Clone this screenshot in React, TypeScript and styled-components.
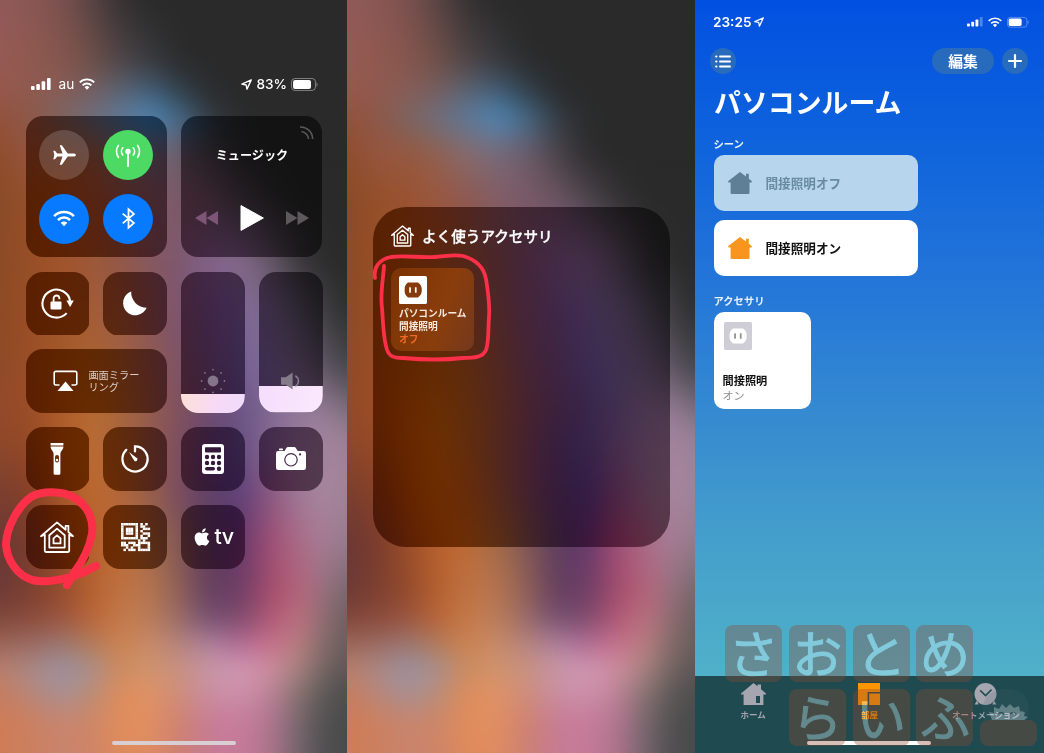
import React from "react";
import styled, { createGlobalStyle } from "styled-components";
import { FaApple } from "react-icons/fa";

const jp = `"Noto Sans CJK JP", sans-serif`;
const latin = `Inter, "Noto Sans CJK JP", sans-serif`;

const GlobalStyle = createGlobalStyle`
  *, *::before, *::after { box-sizing: border-box; }
  body { margin: 0; font-family: ${jp}; background: #2a2a2a; }
  svg { display: block; flex: none; overflow: visible; }
`;

/* ---------- shared ---------- */

const Board = styled.main`
  display: grid;
  grid-template-columns: 347px 348px 349px;
  width: 1044px;
  height: 753px;
  overflow: hidden;
`;

const Screen = styled.section`
  position: relative;
  isolation: isolate;
  display: flex;
  flex-direction: column;
  height: 753px;
  overflow: hidden;
  color: #fff;
`;

const WallpaperSvg = styled.svg`
  position: absolute;
  left: -40px;
  top: -40px;
  z-index: -1;
  width: 428px;
  height: 833px;
  filter: blur(11px);
`;

const Scribble = styled.svg`
  position: absolute;
  inset: 0;
  width: 100%;
  height: 100%;
  pointer-events: none;
  fill: none;
  stroke: #fc2f49;
  stroke-linecap: round;
  stroke-linejoin: round;
`;

const COLS = [0, 30, 60, 90, 120, 150, 180, 210, 240, 270, 300, 325, 348];
const ROWS: [number, string][] = [
  [0, "905a5a 8a5755 7c514e 5a4545 363132 2a2a2a 2a2a2a 2a2a2a 2a2a2a 2a2a2a 2a2a2a 2a2a2a 2a2a2a"],
  [60, "965a53 90594f 86574e 705048 504548 393a3d 2b2b2c 2a2a2a 2a2a2a 2a2a2a 2a2a2a 2a2a2a 2a2a2a"],
  [95, "96574a 905a4f 865e58 786064 5d6878 456482 34444f 2b2d2f 2a2a2a 2a2a2a 2a2a2a 2a2a2a 2a2a2a"],
  [116, "93523c 8c5849 7c6462 6c6f7e 5c7898 4c88b8 446a8a 343c44 2a2b2c 2a2a2a 2a2a2a 2a2a2a 2a2a2a"],
  [155, "8f4c2c 965640 96583e 92604e 886a6c 786a78 6d5c69 4b454b 2f2d2f 2a2a2a 2a2a2a 2a2a2a 2a2a2a"],
  [200, "8a4a28 955029 9a5230 9a5640 8e5850 835d66 7a5967 6e5463 4e464e 343234 2a2a2a 2a2a2a 2a2a2a"],
  [260, "8a4a26 984f27 a0542a 9e5838 925846 855860 7d5770 82648a 86698a 665868 39363a 2c2c2c 2a2a2a"],
  [310, "8c4a26 9a4e26 a0552a a45c36 9c5c46 8a5858 7c5470 785884 806898 7c6c8a 5d5664 3c3b3e 2e2e2f"],
  [365, "8f4a28 9a4e26 a45929 ac632f a26240 905a50 7c5268 735378 745e92 806e96 7b6a82 5b5360 454449"],
  [415, "924a2a 9a4c26 ac5c2a b86b32 a8663c 945c4e 80505f 6c4a6e 6a5284 806892 967a9c 9a8098 806f80"],
  [440, "8f482a 944a26 ae5c29 bc6c32 ac673e 925c50 7c4e60 664672 665282 886892 9a7d9c a4859e 9a8094"],
  [490, "7b4030 863f26 a65426 be6a2e b3663a 955e4c 7a4c60 5f4068 5e427a 8a5880 a07c98 a8879f 9f8298"],
  [540, "6a3836 7a3b2c 9a4d2a b8602c bd6c36 a46a48 7f5856 5c3e5e 64386c a04e74 ab6c88 a67e96 967a8c"],
  [590, "6c3a38 7c3f30 924a2c b4602f c07242 b57550 8e5f58 643e5e 6d3e66 a54c6b b5647a 967280 766669"],
  [618, "80463a 8a4a3a 9a5440 b86438 c57a48 ba7d5b 976a67 735072 7f4a6b b05775 bb7280 8c6c70 6d5e60"],
  [645, "9c685a 9c6c64 9a7874 b27b5c cc8350 c88b6a b78580 b082a0 b46d96 c8728c b87f80 806a68 695c5c"],
  [670, "b98070 ac8a86 9c93a4 a69090 ce8b5f d0956f c8917f c898a8 d29ab6 cf8f9f a5827e 706360 5c5555"],
  [692, "c57c60 b8867a a58f95 b88c78 dd8c5a df9366 cd8c7c c98ea4 ce90ac be8398 84726e 5c5856 4e4c4c"],
  [722, "cf7c56 cc8060 c8856e cd8668 e28d5c e18f62 cf8270 c67c94 c87c9c b27690 75666b 505051 4a4a4b"],
  [753, "cf7c56 cc7f5d c98470 cc8468 df8a5a df8c62 cb7f74 c67b96 c67b9a ad738b 70646a 4e4e4f 4a4a4b"],
];

/** Blurred home-screen wallpaper: each colour row fades into the next one. */
const Wallpaper = ({ id }: { id: string }) => (
  <WallpaperSvg viewBox="-40 -40 428 833" aria-hidden>
    <defs>
      {ROWS.map(([y, colors], i) => {
        const from = i === 0 ? -41 : ROWS[i - 1][0];
        return (
          <React.Fragment key={y}>
            <linearGradient id={`${id}c${i}`} gradientUnits="userSpaceOnUse" x1="0" x2="348" y1="0" y2="0">
              {colors.split(" ").map((c, k) => (
                <stop key={k} offset={COLS[k] / 348} stopColor={`#${c}`} />
              ))}
            </linearGradient>
            <linearGradient id={`${id}f${i}`} gradientUnits="userSpaceOnUse" x1="0" x2="0" y1={from} y2={y}>
              <stop offset="0" stopColor="#fff" stopOpacity="0" />
              <stop offset="1" stopColor="#fff" />
            </linearGradient>
            <mask id={`${id}m${i}`} maskUnits="userSpaceOnUse" x="-40" y="-40" width="428" height="833">
              <rect x="-40" y={from} width="428" height={794 - from} fill={`url(#${id}f${i})`} />
            </mask>
          </React.Fragment>
        );
      })}
    </defs>
    {ROWS.map(([y], i) => (
      <rect
        key={y}
        x="-40"
        y="-40"
        width="428"
        height="833"
        fill={`url(#${id}c${i})`}
        mask={i ? `url(#${id}m${i})` : undefined}
      />
    ))}
  </WallpaperSvg>
);

/* ---------- icons ---------- */

const Signal = ({ w = 20, weak = false }: { w?: number; weak?: boolean }) => (
  <svg width={w} height={w * 0.6} viewBox="0 0 20 12" fill="currentColor">
    <rect x="0" y="8" width="3.6" height="4" rx="1" />
    <rect x="5.3" y="6" width="3.6" height="6" rx="1" />
    <rect x="10.6" y="3.2" width="3.6" height="8.8" rx="1" />
    <rect x="16" y="0" width="3.6" height="12" rx="1" opacity={weak ? 0.3 : 1} />
  </svg>
);

const Wifi = ({ w = 16 }: { w?: number }) => (
  <svg width={w} height={w * 0.75} viewBox="0 0 24 18" fill="none" stroke="currentColor" strokeWidth="2.8">
    <path d="M1.2 6.600a15.300 15.300 0 0 1 21.600 0" />
    <path d="M5.400 11a9.300 9.300 0 0 1 13.200 0" />
    <path d="M12 17.600l-3.600-3.700a5.200 5.200 0 0 1 7.200 0z" fill="currentColor" stroke="none" />
  </svg>
);

const Location = ({ s = 11 }: { s?: number }) => (
  <svg width={s} height={s} viewBox="0 0 12 12" fill="none" stroke="currentColor" strokeWidth="1.500" strokeLinejoin="round">
    <path d="M11.200 1L1 5.600l4.600.9.900 4.500z" />
  </svg>
);

const Battery = ({ w = 27, level = 18 }: { w?: number; level?: number }) => (
  <svg width={w} height={w * 0.48} viewBox="0 0 27 13" fill="none">
    <rect x=".5" y=".5" width="24" height="12" rx="3.4" stroke="#fff" strokeOpacity=".4" />
    <rect x="2" y="2" width={level} height="9" rx="2" fill="#fff" />
    <path d="M25.600 4.400c1.200.4 1.200 3.800 0 4.200z" fill="#fff" fillOpacity=".5" />
  </svg>
);

const Airplane = () => (
  <svg width="24" height="24" viewBox="0 0 24 24" fill="#fff">
    <path d="M24 12c0-.9-1.300-1.500-2.700-1.500h-5.600L9.900 2.300H7.700l2.800 8.200H5.200L3 7.800H1.300L2.300 12l-1 4.200H3l2.200-2.700h5.300l-2.800 8.200h2.200l5.800-8.200h5.600c1.400 0 2.700-.6 2.700-1.500z" />
  </svg>
);

const Antenna = () => (
  <svg width="26" height="24" viewBox="0 0 26 24" fill="none" stroke="#fff" strokeWidth="1.600" strokeLinecap="round">
    <circle cx="13" cy="8.400" r="2.700" fill="#fff" stroke="none" />
    <path d="M13 9v14" strokeWidth="1.900" />
    <path d="M7.800 4.800a5.400 5.400 0 0 0 0 7.200M18.200 4.800a5.400 5.400 0 0 1 0 7.200M3.400 2.400a11 11 0 0 0 0 12M22.600 2.400a11 11 0 0 1 0 12" />
  </svg>
);

const BluetoothIcon = () => (
  <svg width="15" height="23" viewBox="0 0 16 24" fill="none" stroke="#fff" strokeWidth="1.900" strokeLinejoin="miter">
    <path d="M1.800 6.800l12 10L8 22V2l5.800 5.200-12 10" />
  </svg>
);

const RotationUnlock = () => (
  <svg width="33" height="32" viewBox="0 0 33 32" fill="none" stroke="#fff" strokeWidth="2.100">
    <path d="M25.700 26.100A14 14 0 1 1 29.200 14" />
    <path d="M25.400 13.400h7.400l-3.700 6.600z" fill="#fff" stroke="none" />
    <rect x="9.500" y="14.600" width="11" height="8" rx="1" fill="#fff" stroke="none" />
    <path d="M12.600 15v-3.600a2.900 2.900 0 0 1 5.800 0v.9" strokeWidth="1.800" />
  </svg>
);

const Moon = () => (
  <svg width="24" height="24" viewBox="0 0 24 24" fill="#fff">
    <path d="M8.200.4A15.500 15.500 0 0 0 23.700 16.800 12.300 12.300 0 1 1 8.200.4z" />
  </svg>
);

const Mirroring = () => (
  <svg width="25" height="22" viewBox="0 0 25 22" fill="none" stroke="#fff" strokeWidth="1.600">
    <path d="M6.500 15H2.800A1.600 1.600 0 0 1 1.200 13.400V3A1.600 1.600 0 0 1 2.800 1.400h19.400A1.600 1.600 0 0 1 23.800 3v10.400a1.600 1.600 0 0 1-1.600 1.600h-3.700" />
    <path d="M12.500 11.400l8 9.600h-16z" fill="#fff" stroke="none" />
  </svg>
);

const AirplayAudio = () => (
  <svg width="14" height="14" viewBox="0 0 14 14" fill="none" stroke="#fff" strokeOpacity=".3" strokeWidth="1.600">
    <path d="M0 1a12 12 0 0 1 12.600 12" />
    <path d="M1.500 5.500a8 8 0 0 1 7 7.500" />
  </svg>
);

const Skip = ({ back = false }: { back?: boolean }) => (
  <svg width="23" height="14" viewBox="0 0 23 14" fill={back ? "#7c5577" : "#5c585c"}>
    <path transform={back ? "matrix(-1 0 0 1 23 0)" : undefined} d="M0 0l11.500 7L0 14zM11.500 0L23 7l-11.500 7z" />
  </svg>
);

const Play = () => (
  <svg width="24" height="26" viewBox="0 0 24 26" fill="#fff">
    <path d="M1 .6v24.800L23.400 13z" stroke="#fff" strokeLinejoin="round" />
  </svg>
);

const Sun = () => (
  <svg width="26" height="26" viewBox="0 0 26 26" fill="#857588">
    <circle cx="13" cy="13" r="5.400" />
    {Array.from({ length: 8 }, (_, i) => (
      <circle key={i} cx="13" cy="1.600" r=".9" transform={`rotate(${i * 45} 13 13)`} />
    ))}
  </svg>
);

const Speaker = () => (
  <svg width="20" height="18" viewBox="0 0 20 18" fill="#857a88">
    <path d="M0 5.300h4.800L11.600.4v17.200l-6.800-4.900H0z" />
    <path d="M14.300 3.800c4.200 2.600 4.200 8 0 10.400" fill="none" stroke="#857a88" strokeWidth="1.600" />
  </svg>
);

const Torch = () => (
  <svg width="14" height="32" viewBox="0 0 14 32" fill="#fff">
    <path d="M.6 0h12.800v2.400H.6zM.6 3.400h12.800c0 3.600-3 4.200-3 7.600v19.400a1.400 1.400 0 0 1-1.400 1.400H5a1.400 1.400 0 0 1-1.400-1.400V11c0-3.400-3-4-3-7.600z" />
    <rect x="5" y="12" width="4" height="7.600" rx="2" fill="#6a2d08" />
    <circle cx="7" cy="17" r="1.300" fill="#fff" />
  </svg>
);

const Timer = () => (
  <svg width="28" height="28" viewBox="0 0 28 28" fill="none" stroke="#fff" strokeWidth="2.300" strokeLinecap="round">
    <path d="M5.300 4.900A12.600 12.600 0 1 0 14 1.400v5" />
    <path d="M8 7l8 6.200a1.900 1.900 0 0 1-2.600 2.700z" fill="#fff" stroke="none" />
  </svg>
);

const Calculator = () => (
  <svg width="22" height="30" viewBox="0 0 22 30">
    <rect width="22" height="30" rx="3" fill="#fff" />
    <g fill="#35193a">
      <rect x="3" y="3.200" width="16" height="5.200" rx=".8" />
      {[13, 19].map((y) => [5, 11, 17].map((x) => <circle key={`${x}-${y}`} cx={x} cy={y} r="2.200" />))}
      <rect x="3" y="23" width="10" height="3.600" rx="1.800" />
      <circle cx="17" cy="24.800" r="2.200" />
    </g>
  </svg>
);

const CameraIcon = () => (
  <svg width="30" height="24" viewBox="0 0 30 24">
    <path d="M2.200 4h6.300l2-3.200Q11 0 12 0h6.200q1 0 1.500.8l2 3.200h6.100A2.200 2.200 0 0 1 30 6.200v14.600a2.200 2.200 0 0 1-2.200 2.200H2.200A2.200 2.200 0 0 1 0 20.800V6.200A2.200 2.200 0 0 1 2.200 4z" fill="#fff" />
    <rect x="3" y="1.600" width="4" height="1.700" rx=".6" fill="#fff" />
    <circle cx="15" cy="12.800" r="6.200" fill="none" stroke="#47294a" strokeWidth="1.200" />
    <circle cx="24" cy="7.400" r="1.100" fill="#47294a" />
  </svg>
);

const HomeKit = ({ w = 34, bold = 1.8 }: { w?: number; bold?: number }) => (
  <svg width={w} height={(w * 32) / 34} viewBox="0 0 34 32" fill="none" stroke="#fff" strokeWidth={bold} strokeLinejoin="round" strokeLinecap="round">
    <path d="M4.800 13.600L1 15.200 17 1.400l8.600 7.300V4.800h2.800v6.200L33 15.200l-3.800-1.400v16a1.200 1.200 0 0 1-1.200 1.200H6a1.200 1.200 0 0 1-1.200-1.200z" />
    <path d="M9.300 14.200L17 7.600l7.700 6.600v12.400H9.300z" />
    <path d="M13.500 17.400L17 14.300l3.500 3.100v5h-7z" />
  </svg>
);

const QR = [
  "111111101010",
  "100000101100",
  "101110100111",
  "101110101000",
  "101110100111",
  "100000101001",
  "111111101110",
  "000000010100",
  "110111011111",
  "111001110001",
  "001010010001",
  "010111011111",
];

const QrCode = () => (
  <svg width="29" height="28" viewBox="0 0 12 12" preserveAspectRatio="none" fill="#fff">
    {QR.flatMap((row, y) =>
      row.split("").map((c, x) => (c === "1" ? <rect key={`${x}-${y}`} x={x} y={y} width="1.05" height="1.05" /> : null)),
    )}
  </svg>
);

const House = ({ color, w = 24 }: { color: string; w?: number }) => (
  <svg width={w} height={(w * 22) / 24} viewBox="0 0 24 22" fill={color}>
    <path d="M12 0l6 4.600V1.800h2.800v5L24 9.300l-.5 1.200h-2v10.400a1.100 1.100 0 0 1-1.100 1.100H3.700a1.100 1.100 0 0 1-1.100-1.100V10.500H.5L0 9.300z" />
  </svg>
);

const Outlet = ({ plate, face, slot, s = 28 }: { plate: string; face: string; slot: string; s?: number }) => (
  <svg width={s} height={s} viewBox="0 0 28 28">
    <rect width="28" height="28" rx="1.600" fill={plate} />
    <path d="M9 6.600h10c2.800 2 3.800 4.200 3.800 7.400S21.800 19.400 19 21.400H9C6.200 19.400 5.600 17.200 5.600 14S6.200 8.600 9 6.600z" fill={face} />
    <rect x="10.200" y="11.300" width="1.700" height="5.400" fill={slot} />
    <rect x="15.900" y="11.300" width="1.700" height="5.400" fill={slot} />
  </svg>
);

/* ---------- control centre ---------- */

const ControlStatus = styled.header`
  display: flex;
  align-items: center;
  justify-content: space-between;
  height: 20px;
  margin: 74px 29px 22px 31px;
  font: 500 13.600px/20px ${latin};
`;

const StatusGroup = styled.div<{ $gap: number }>`
  display: flex;
  align-items: center;
  gap: ${(p) => p.$gap}px;
`;

const Carrier = styled.span`
  margin-left: 3px;
  font-weight: 400;
`;

const ControlGrid = styled.div`
  display: grid;
  grid-template-columns: repeat(4, 63.6px);
  grid-auto-rows: 63.6px;
  gap: 14.2px;
  padding-left: 25.7px;
`;

const Tile = styled.div<{ $cols?: number; $rows?: number }>`
  grid-column: span ${(p) => p.$cols ?? 1};
  grid-row: span ${(p) => p.$rows ?? 1};
  display: flex;
  align-items: center;
  justify-content: center;
  border-radius: 17px;
  overflow: hidden;
  backdrop-filter: brightness(0.46) saturate(1.7);
`;

const Connectivity = styled(Tile)`
  flex-wrap: wrap;
  align-content: center;
  gap: 14px;
`;

const RoundToggle = styled.div<{ $fill: string }>`
  display: flex;
  align-items: center;
  justify-content: center;
  width: 50px;
  height: 50px;
  border-radius: 50%;
  background: ${(p) => p.$fill};
`;

const MusicTile = styled(Tile)`
  flex-direction: column;
  justify-content: flex-start;
  padding: 10px 9px 0;
  & > svg { align-self: flex-end; }
`;

const MusicTitle = styled.div`
  margin-top: 6px;
  font: 700 12.100px/18px ${jp};
`;

const Transport = styled.div`
  display: flex;
  align-items: center;
  gap: 22px;
  margin-top: 41px;
`;

const MirrorTile = styled(Tile)`
  gap: 10px;
`;

const MirrorLabel = styled.div`
  font: 400 10.200px/12px ${jp};
  color: #dccdc6;
`;

const SliderTile = styled(Tile)<{ $level: number; $fill: string }>`
  align-items: flex-end;
  background: linear-gradient(${(p) => p.$fill}) bottom / 100% ${(p) => p.$level}px no-repeat;
`;

const SliderIcon = styled.div<{ $bottom: number }>`
  padding-bottom: ${(p) => p.$bottom}px;
`;

const TvMark = styled.div`
  display: flex;
  align-items: center;
  gap: 2px;
  font: 500 21.500px/24px Inter, sans-serif;
  letter-spacing: -0.4px;
  & > span { margin-top: -2px; }
`;

const HomeBar = styled.div<{ $color: string; $x: number }>`
  width: 124px;
  height: 4.500px;
  margin: auto 0 8px ${(p) => p.$x}px;
  border-radius: 3px;
  background: ${(p) => p.$color};
`;

const ControlCenter = () => (
  <Screen>
    <Wallpaper id="a" />
    <ControlStatus>
      <StatusGroup $gap={4.500}>
        <Signal />
        <Carrier>au</Carrier>
        <Wifi />
      </StatusGroup>
      <StatusGroup $gap={4}>
        <Location />
        <span>83%</span>
        <Battery />
      </StatusGroup>
    </ControlStatus>
    <ControlGrid>
      <Connectivity $cols={2} $rows={2}>
        <RoundToggle $fill="rgba(255,255,255,.17)"><Airplane /></RoundToggle>
        <RoundToggle $fill="#4cd964"><Antenna /></RoundToggle>
        <RoundToggle $fill="#077aff"><Wifi w={22} /></RoundToggle>
        <RoundToggle $fill="#077aff"><BluetoothIcon /></RoundToggle>
      </Connectivity>
      <MusicTile $cols={2} $rows={2}>
        <AirplayAudio />
        <MusicTitle>ミュージック</MusicTitle>
        <Transport>
          <Skip back />
          <Play />
          <Skip />
        </Transport>
      </MusicTile>
      <Tile><RotationUnlock /></Tile>
      <Tile><Moon /></Tile>
      <SliderTile $rows={2} $level={19} $fill="100deg, #fde0d6, #f6d9f8 60%, #efdcfc">
        <SliderIcon $bottom={18.500}><Sun /></SliderIcon>
      </SliderTile>
      <SliderTile $rows={2} $level={26.500} $fill="100deg, #f5ddfc, #fbe8fd">
        <SliderIcon $bottom={22.500}><Speaker /></SliderIcon>
      </SliderTile>
      <MirrorTile $cols={2}>
        <Mirroring />
        <MirrorLabel>画面ミラー<br />リング</MirrorLabel>
      </MirrorTile>
      <Tile><Torch /></Tile>
      <Tile><Timer /></Tile>
      <Tile><Calculator /></Tile>
      <Tile><CameraIcon /></Tile>
      <Tile><HomeKit /></Tile>
      <Tile><QrCode /></Tile>
      <Tile>
        <TvMark><FaApple size={20} /><span>tv</span></TvMark>
      </Tile>
    </ControlGrid>
    <HomeBar $color="#d9ced1" $x={112} />
    <Scribble viewBox="0 0 347 753" strokeWidth="8">
      <path d="M31 497C18 506 6 528 6 545C7 560 17 575 32 580C44 583 62 580 74 576C83 573 91 569 96 566" />
      <path d="M31 497C41 491 62 490 75 498C88 506 94 520 92 534C89 550 80 565 74 573L67 585" />
    </Scribble>
  </Screen>
);

/* ---------- favourite accessories ---------- */

const HomePanel = styled.div`
  display: flex;
  flex-direction: column;
  width: 297px;
  height: 340px;
  margin: 207px 0 0 26px;
  padding: 18px;
  border-radius: 33px;
  backdrop-filter: brightness(0.47) saturate(1.65);
`;

const PanelHeader = styled.div`
  display: flex;
  align-items: center;
  gap: 8px;
  height: 22px;
  font: 500 14.600px/22px ${jp};
  -webkit-text-stroke: 0.3px #fff;
`;

const FavoriteTile = styled.div`
  display: flex;
  flex-direction: column;
  width: 83px;
  height: 83px;
  margin-top: 21px;
  padding: 8px 0 0 8px;
  border-radius: 10px;
  background: linear-gradient(110deg, #7c3304, #8a3d0c 60%, #74391e);
  font: 700 9.700px/13px ${jp};
  color: #f7e9df;
  white-space: nowrap;
`;

const FavoriteName = styled.div`
  margin-top: 3px;
`;

const FavoriteState = styled.div`
  color: #ee6a22;
`;

const FavoriteAccessories = () => (
  <Screen>
    <Wallpaper id="b" />
    <HomePanel>
      <PanelHeader><HomeKit w={23} bold={2} />よく使うアクセサリ</PanelHeader>
      <FavoriteTile>
        <Outlet plate="#fff" face="#853a0c" slot="#fff" />
        <FavoriteName>パソコンルーム<br />間接照明</FavoriteName>
        <FavoriteState>オフ</FavoriteState>
      </FavoriteTile>
    </HomePanel>
    <Scribble viewBox="0 0 348 753" strokeWidth="3.800">
      <path d="M28 278C26 267 33 259 44 257C58 255 72 258 88 257C100 256 108 254 116 256C130 260 137 268 139 279C141 291 143 304 142 317C141 330 142 342 139 350C136 357 128 358 116 358C98 360 78 360 56 358C45 358 41 356 39 346C36 334 36 320 35 308C33 294 36 281 37 266" />
    </Scribble>
  </Screen>
);

/* ---------- Home app room ---------- */

const RoomScreen = styled(Screen)`
  background: linear-gradient(#0250e1, #0e62dc 18%, #2476d8 38%, #368bd0 56%, #459fcb 72%, #50b1c9 90%);
`;

const RoomStatus = styled.header`
  display: flex;
  align-items: center;
  justify-content: space-between;
  height: 20px;
  margin: 12px 15px 0 18px;
  font: 600 13.600px/20px ${latin};
`;

const Toolbar = styled.div`
  display: flex;
  align-items: center;
  gap: 8px;
  height: 26px;
  margin: 16px 16px 0 15px;
`;

const ToolButton = styled.div<{ $wide?: boolean }>`
  display: grid;
  place-items: center;
  width: ${(p) => (p.$wide ? 62 : 26)}px;
  height: 26px;
  border-radius: 13px;
  background: #286bbd;
  font: 700 14.800px/26px ${jp};
  &:first-child { margin-right: auto; }
`;

const RoomTitle = styled.h1`
  margin: 8px 0 0 19px;
  font: 700 26.900px/40px ${jp};
`;

const RoomBody = styled.div`
  display: flex;
  flex-direction: column;
  width: 204px;
  margin: 14px 0 0 18.500px;
`;

const SectionLabel = styled.div<{ $gap?: number }>`
  height: 19px;
  margin-top: ${(p) => p.$gap ?? 0}px;
  font: 700 10.300px/15px ${jp};
  color: #e6f1fd;
`;

const SceneCard = styled.div<{ $on?: boolean }>`
  display: flex;
  align-items: center;
  gap: 14px;
  height: 56px;
  margin-bottom: 9px;
  padding: 0 0 1px 14px;
  border-radius: 10px;
  background: ${(p) => (p.$on ? "#fff" : "#b7d5ec")};
  color: ${(p) => (p.$on ? "#111" : "#688ba1")};
  font: 700 12.600px/20px ${jp};
`;

const AccessoryCard = styled.div`
  display: flex;
  flex-direction: column;
  width: 97.500px;
  height: 97px;
  padding: 10px 9px 7px;
  border-radius: 10px;
  background: #fff;
  color: #111;
  font: 700 11.200px/15px ${jp};
  & > svg { margin: 0 0 auto 1px; }
`;

const AccessoryState = styled.div`
  color: #8e8e93;
  font-weight: 400;
  font-size: 11px;
  line-height: 14px;
`;

const TabBar = styled.nav`
  display: grid;
  grid-template-columns: repeat(3, 1fr);
  height: 77px;
  margin-top: auto;
  padding-top: 7px;
  background: #1e4a50;
`;

const Tab = styled.div<{ $active?: boolean }>`
  display: flex;
  flex-direction: column;
  align-items: center;
  gap: 2px;
  color: ${(p) => (p.$active ? "#ff9500" : "#a6a6b0")};
  font: 700 8.500px/14px ${jp};
`;

const RoomHomeBar = styled(HomeBar)`
  margin-top: -12.500px;
  flex: none;
`;

/* Site watermark laid over the lower part of the screen. */
const Watermark = styled.div`
  position: absolute;
  left: 30px;
  bottom: 7px;
  display: grid;
  grid-template-columns: repeat(5, 57px);
  grid-auto-rows: 57px;
  gap: 6.800px;
  opacity: 0.35;
`;

const KanaTile = styled.div<{ $col: number; $row: number }>`
  grid-column: ${(p) => p.$col};
  grid-row: ${(p) => p.$row};
  border-radius: 8px;
  background: rgb(142, 74, 51);
  color: rgb(225, 255, 255);
  font: 400 50px/53px ${jp};
  text-align: center;
  -webkit-text-stroke: 1px rgb(225, 255, 255);
`;

const MascotTile = styled.div`
  grid-column: 5;
  grid-row: 2;
  display: flex;
  flex-direction: column;
  align-items: center;
  justify-content: flex-end;
`;

const MascotBase = styled.div`
  width: 57px;
  height: 26px;
  border-radius: 8px;
  background: rgb(142, 74, 51);
`;

const RoomApp = () => (
  <RoomScreen>
    <RoomStatus>
      <StatusGroup $gap={3}><span>23:25</span><Location s={10} /></StatusGroup>
      <StatusGroup $gap={5}><Signal w={16} weak /><Wifi w={14} /><Battery w={22} level={16} /></StatusGroup>
    </RoomStatus>
    <Toolbar>
      <ToolButton>
        <svg width="16" height="13" viewBox="0 0 16 13" fill="none" stroke="#fff" strokeWidth="1.900" strokeLinecap="round">
          <path d="M5 1.500h10M5 6.500h10M5 11.500h10" />
          <path d="M1.200 1.500h.2M1.200 6.500h.2M1.200 11.500h.2" strokeWidth="2.200" />
        </svg>
      </ToolButton>
      <ToolButton $wide>編集</ToolButton>
      <ToolButton>
        <svg width="14" height="14" viewBox="0 0 14 14" stroke="#fff" strokeWidth="2.200" strokeLinecap="round">
          <path d="M7 1v12M1 7h12" />
        </svg>
      </ToolButton>
    </Toolbar>
    <RoomTitle>パソコンルーム</RoomTitle>
    <RoomBody>
      <SectionLabel>シーン</SectionLabel>
      <SceneCard><House color="#5e7f96" />間接照明オフ</SceneCard>
      <SceneCard $on><House color="#f8951f" />間接照明オン</SceneCard>
      <SectionLabel $gap={8}>アクセサリ</SectionLabel>
      <AccessoryCard>
        <Outlet plate="#cfced6" face="#fff" slot="#8d8c92" />
        <div>間接照明</div>
        <AccessoryState>オン</AccessoryState>
      </AccessoryCard>
    </RoomBody>
    <TabBar>
      <Tab>
        <svg width="25" height="22" viewBox="0 0 25 22" fill="currentColor">
          <path fillRule="evenodd" d="M12.500 0l4 3.200V1.500H20v4.700l5 4.200v1.200h-2.600V22H2.600V11.600H0v-1.200zM15 13v7h4v-7z" />
        </svg>
        ホーム
      </Tab>
      <Tab $active>
        <svg width="22" height="22" viewBox="0 0 22 22" fill="currentColor">
          <path d="M0 0h22v9H9.600v13H0zM11.200 10.600H22V22H11.200z" />
        </svg>
        部屋
      </Tab>
      <Tab>
        <svg width="23" height="22" viewBox="0 0 23 22" fill="currentColor">
          <circle cx="11.500" cy="11" r="11" />
          <path d="M3 17.500L.6 21.500h4zM20 17.500l2.400 4h-4z" />
          <path d="M6.200 7.400l5.300 5.200 6-6" fill="none" stroke="#1e4a50" strokeWidth="1.500" />
        </svg>
        オートメーション
      </Tab>
    </TabBar>
    <RoomHomeBar $color="#fff" $x={112} />
    <Watermark>
      {["さおとめ", " らいふ"].map((line, r) =>
        line.split("").map((ch, c) => (ch === " " ? null : <KanaTile key={ch} $col={c + 1} $row={r + 1}>{ch}</KanaTile>)),
      )}
      <MascotTile>
        <svg width="57" height="31" viewBox="0 0 57 31">
          <path d="M4 31Q-2 4 22 0Q50-2 49 24L46 31z" fill="#4a6270" opacity=".5" />
          <path d="M12 31l-3-8 5 1 0-6 5 2 3-5 4 4 4-4 4 4 5-2 1 5 5 1-1 4 4 1-5 4q-16 5-31-1z" fill="#dfe9ec" />
          <path d="M18 25q3-3 6 0M30 25q3-3 6 0M40 22q3-3 6 2" fill="none" stroke="#4a5a60" strokeWidth="1.500" />
        </svg>
        <MascotBase />
      </MascotTile>
    </Watermark>
  </RoomScreen>
);

const App = () => (
  <Board>
    <GlobalStyle />
    <ControlCenter />
    <FavoriteAccessories />
    <RoomApp />
  </Board>
);

export default App;
